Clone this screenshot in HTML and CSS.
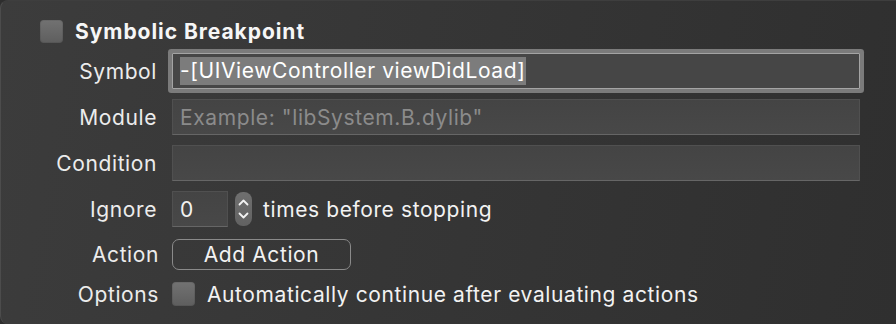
FILE: index.html
```html
<!DOCTYPE html>
<html lang="en">
<head>
<meta charset="utf-8">
<title>Symbolic Breakpoint</title>
<link rel="stylesheet" href="styles.css">
</head>
<body>
<div class="panel">
  <div class="title-row">
    <span class="checkbox"></span>
    <span class="title">Symbolic Breakpoint</span>
  </div>
  <div class="form">
    <label class="label">Symbol</label>
    <div class="field focused"><span class="selected">-[UIViewController viewDidLoad]</span></div>

    <label class="label">Module</label>
    <div class="field"><span class="placeholder">Example: "libSystem.B.dylib"</span></div>

    <label class="label">Condition</label>
    <div class="field"></div>

    <label class="label">Ignore</label>
    <div class="inline">
      <div class="field small">0</div>
      <span class="stepper">
        <svg width="17" height="34" viewBox="0 0 17 34">
          <path d="M4.5 12.5 L8.5 8.5 L12.5 12.5" fill="none" stroke="#f2f2f2" stroke-width="1.8" stroke-linecap="round" stroke-linejoin="round"/>
          <path d="M4.5 21.5 L8.5 25.5 L12.5 21.5" fill="none" stroke="#f2f2f2" stroke-width="1.8" stroke-linecap="round" stroke-linejoin="round"/>
        </svg>
      </span>
      <span class="text">times before stopping</span>
    </div>

    <label class="label shift">Action</label>
    <div class="inline">
      <button class="button">Add Action</button>
    </div>

    <label class="label shift">Options</label>
    <div class="inline">
      <span class="checkbox small-check"></span>
      <span class="text opt">Automatically continue after evaluating actions</span>
    </div>
  </div>
</div>
</body>
</html>
```

FILE: styles.css
```css
html, body {
  margin: 0;
  padding: 0;
  width: 896px;
  height: 324px;
  overflow: hidden;
  background: #2e2e2e;
}

body {
  font-family: Inter, "Open Sans", "Liberation Sans", sans-serif;
  font-size: 21px;
  letter-spacing: 0.6px;
  color: #f2f2f2;
}

.panel {
  box-sizing: border-box;
  width: 896px;
  height: 324px;
  padding-top: 20px;
  background: linear-gradient(100deg, #3c3c3c 0%, #363636 45%, #2f2f2f 100%);
  border-left: 1px solid #4c4c4c;
  border-top: 1px solid #3e3e3e;
  border-radius: 8px 0 0 8px;
}

.title-row {
  display: flex;
  align-items: center;
  height: 23px;
  padding-left: 39px;
  margin-top: -1px;
}

.checkbox {
  display: inline-block;
  width: 23px;
  height: 23px;
  border-radius: 4px;
  background: linear-gradient(180deg, #727272 0%, #5e5e5e 100%);
  box-shadow: inset 0 0 0 1px rgba(0, 0, 0, 0.08);
  flex: none;
}

.title {
  margin-left: 12px;
  font-weight: 700;
  font-size: 21px;
  letter-spacing: 0.95px;
  color: #f6f6f6;
}

.form {
  display: grid;
  grid-template-columns: 156px 688px;
  grid-template-rows: 36px 36px 36px 36px 34px 26px;
  column-gap: 15px;
  row-gap: 10px;
  margin-top: 10px;
}

.label {
  display: flex;
  align-items: center;
  justify-content: flex-end;
  color: #ececec;
}

.label.shift {
  margin-right: -2px;
}

.field {
  box-sizing: border-box;
  display: flex;
  align-items: center;
  height: 36px;
  padding-left: 7px;
  background: linear-gradient(180deg, #444444 0%, #484848 100%);
  border: 1px solid #505050;
  border-bottom-color: #666666;
}

.field.focused {
  border: 1px solid #a4a4a4;
  border-radius: 1px;
  box-shadow: 0 0 0 4px #7b7b7b;
  background: #464646;
}

.selected {
  background: #7c7c7c;
  color: #ffffff;
  line-height: 28px;
  padding-right: 1px;
}

.placeholder {
  color: #8b8b8b;
}

.inline {
  display: flex;
  align-items: center;
}

.field.small {
  width: 56px;
  color: #f2f2f2;
}

.stepper {
  display: block;
  width: 17px;
  height: 34px;
  margin-left: 7px;
  border-radius: 8px;
  background: linear-gradient(180deg, #6f6f6f 0%, #626262 100%);
}

.stepper svg {
  display: block;
}

.text {
  margin-left: 11px;
  color: #f2f2f2;
}

.button {
  box-sizing: border-box;
  width: 179px;
  height: 31px;
  margin: 0;
  padding: 0;
  border: 1.5px solid #8a8a8a;
  border-radius: 7px;
  background: transparent;
  color: #f2f2f2;
  font-family: inherit;
  font-size: 21px;
  letter-spacing: inherit;
  display: flex;
  align-items: center;
  justify-content: center;
}

.small-check {
  height: 24px;
}

.text.opt {
  margin-left: 12px;
}
```
